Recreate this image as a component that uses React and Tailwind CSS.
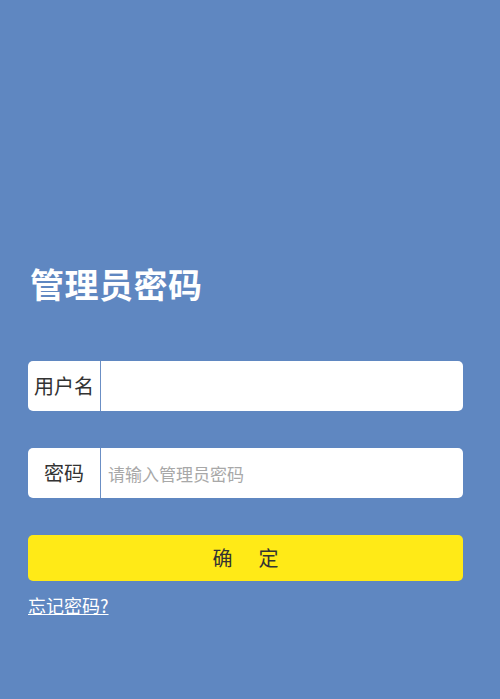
export default function App() {
  const font = { fontFamily: '"Noto Sans CJK SC", "Noto Sans", sans-serif' };
  return (
    <div className="w-[500px] h-[699px] bg-[#5f87c1] px-[28px] pt-[262px]" style={font}>
      <h1 className="text-white text-[34px] leading-[44px] font-bold pl-[2px] tracking-[0.5px]">管理员密码</h1>
      <div className="mt-[55px] h-[50px] w-[435px] bg-white rounded-[5px] flex items-center">
        <div className="w-[73px] h-full flex items-center justify-center text-[20px] text-[#333] border-r border-[#6b8fc5]">用户名</div>
        <input className="flex-1 h-full px-[7px] outline-none bg-transparent text-[17px]" />
      </div>
      <div className="mt-[37px] h-[50px] w-[435px] bg-white rounded-[5px] flex items-center">
        <div className="w-[73px] h-full flex items-center justify-center text-[20px] text-[#333] border-r border-[#6b8fc5]">密码</div>
        <input type="password" placeholder="请输入管理员密码" className="flex-1 h-full px-[7px] outline-none bg-transparent text-[17px] placeholder:text-[#a8a8a8]" style={font} />
      </div>
      <button className="mt-[37px] h-[46px] w-[435px] bg-[#ffea17] rounded-[5px] text-[20px] text-[#333] flex items-center justify-center">
        <span>确</span><span className="ml-[26px]">定</span>
      </button>
      <a href="#" className="block mt-[11px] text-white text-[18px] underline leading-[26px] w-fit" style={{ fontFamily: '"Noto Sans CJK SC", "Liberation Sans", sans-serif' }}>忘记密码?</a>
    </div>
  );
}
